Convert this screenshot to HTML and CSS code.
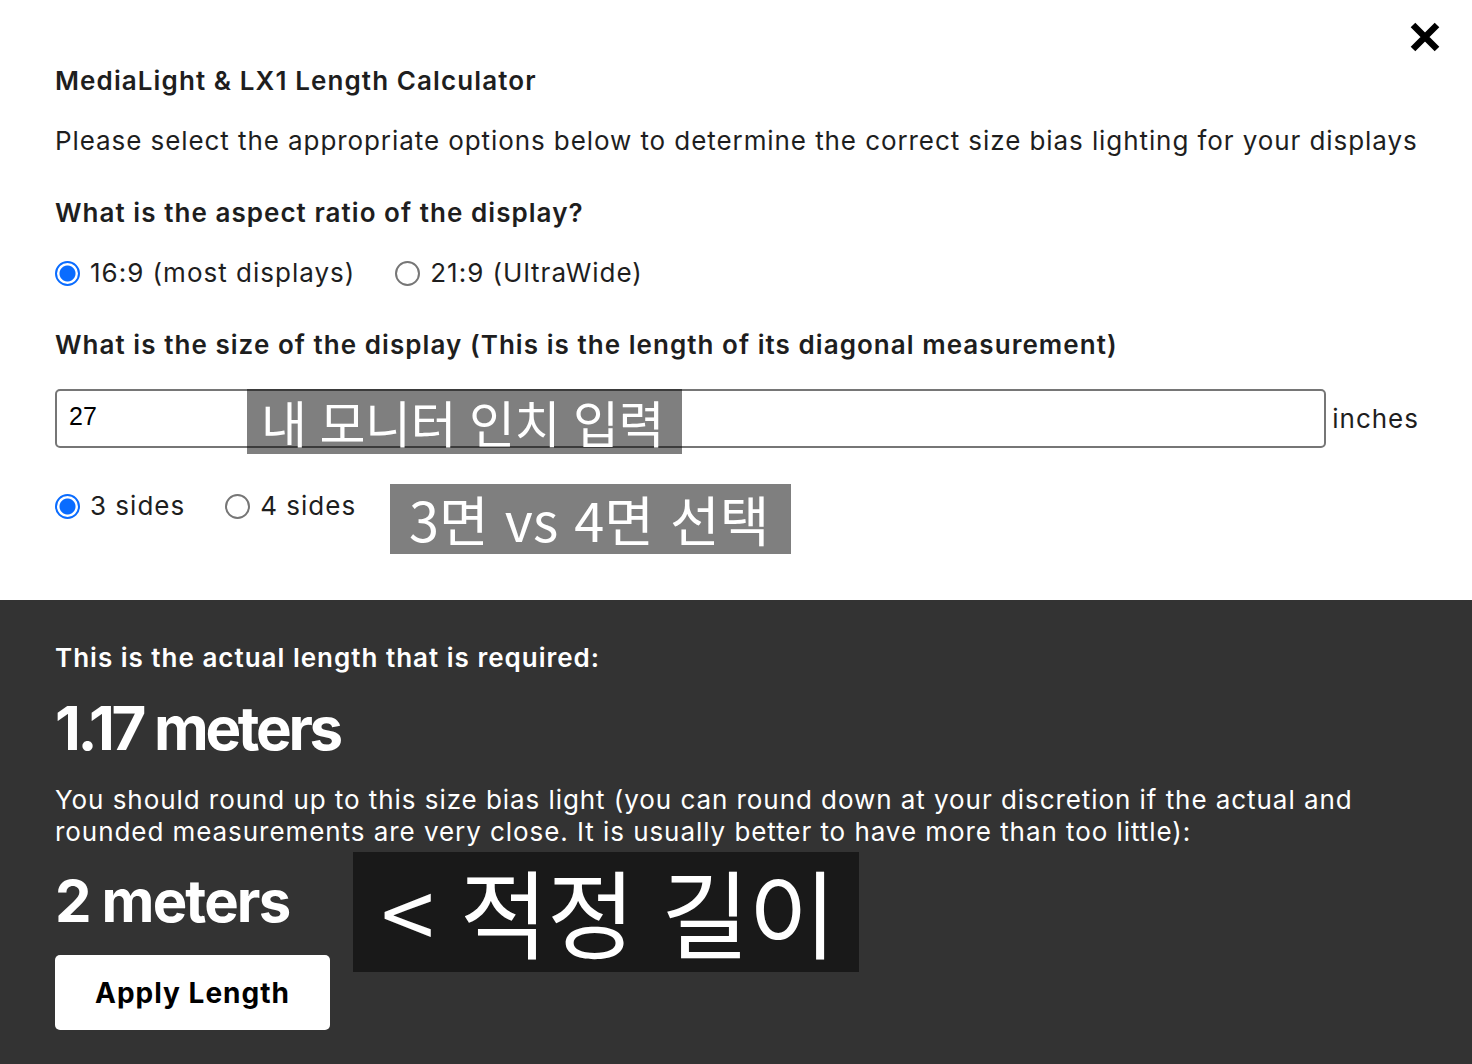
FILE: index.html
```html
<!DOCTYPE html>
<html lang="en">
<head>
<meta charset="utf-8">
<title>MediaLight &amp; LX1 Length Calculator</title>
<link rel="stylesheet" href="styles.css">
</head>
<body>
<div class="modal">
  <button class="close" aria-label="Close">
    <svg viewBox="0 0 32 32" width="32" height="32"><path d="M4 4 L28 28 M28 4 L4 28" stroke="#000" stroke-width="6.5" fill="none"/></svg>
  </button>
  <section class="form">
    <h1 class="title">MediaLight &amp; LX1 Length Calculator</h1>
    <p class="intro">Please select the appropriate options below to determine the correct size bias lighting for your displays</p>
    <h2 class="question q1">What is the aspect ratio of the display?</h2>
    <div class="radios ratio">
      <label class="opt"><input type="radio" name="ratio" checked><span>16:9 (most displays)</span></label>
      <label class="opt"><input type="radio" name="ratio"><span>21:9 (UltraWide)</span></label>
    </div>
    <h2 class="question q2">What is the size of the display (This is the length of its diagonal measurement)</h2>
    <div class="size-row">
      <div class="field">
        <input class="size-input" type="text" value="27">
        <div class="note note-size">내 모니터 인치 입력</div>
      </div>
      <span class="unit">inches</span>
    </div>
    <div class="radios sides">
      <label class="opt"><input type="radio" name="sides" checked><span>3 sides</span></label>
      <label class="opt"><input type="radio" name="sides"><span>4 sides</span></label>
      <div class="note note-sides">3면 vs 4면 선택</div>
    </div>
  </section>
  <section class="result">
    <h3 class="result-label">This is the actual length that is required:</h3>
    <div class="big actual">1.17 meters</div>
    <p class="advice">You should round up to this size bias light (you can round down at your discretion if the actual and rounded measurements are very close. It is usually better to have more than too little):</p>
    <div class="rounded">
      <div class="big final">2 meters</div>
      <div class="note note-length">&lt; 적정 길이</div>
    </div>
    <button class="apply">Apply Length</button>
  </section>
</div>
</body>
</html>
```

FILE: styles.css
```css
* { box-sizing: border-box; }
html, body { margin: 0; padding: 0; }
body {
  background: #ffffff;
  font-family: Inter, "Noto Sans", "Noto Sans CJK KR", sans-serif;
  color: #1e1e1e;
  width: 1472px;
  height: 1064px;
  overflow: hidden;
}
.modal { position: relative; height: 1064px; display: flex; flex-direction: column; }
.close {
  position: absolute;
  top: 21px;
  left: 1409px;
  width: 32px;
  height: 32px;
  padding: 0;
  border: 0;
  background: transparent;
}
.close svg { display: block; }

.form { height: 600px; padding: 65px 0 0 55px; }
.title { margin: 0; font-size: 26px; line-height: 32px; font-weight: 600; letter-spacing: 1.1px; color: #1e1e1e; }
.intro { margin: 28px 0 0; font-size: 26px; line-height: 32px; font-weight: 400; letter-spacing: 0.92px; white-space: nowrap; }
.question { margin: 0; font-size: 26px; line-height: 32px; font-weight: 600; letter-spacing: 1.05px; }
.q1 { margin-top: 40px; }
.radios { display: flex; align-items: center; gap: 40px; font-size: 26px; line-height: 32px; letter-spacing: 1px; }
.ratio { margin-top: 28px; }
.q2 { margin-top: 40px; }
.opt { display: flex; align-items: center; gap: 10px; }
.opt input {
  appearance: none;
  -webkit-appearance: none;
  margin: 0;
  width: 25px;
  height: 25px;
  border: 2px solid #767676;
  border-radius: 50%;
  background: #fff;
}
.opt input:checked {
  border: 2.5px solid #0a6cff;
  background: radial-gradient(circle, #0a6cff 0 7.5px, #fff 8.5px);
}

.size-row { margin-top: 28px; display: flex; align-items: center; gap: 6px; width: 1364px; }
.field { position: relative; flex: 1; }
.size-input {
  display: block;
  width: 100%;
  height: 59px;
  border: 2px solid #767676;
  border-radius: 5px;
  padding: 0 12px 4px;
  font-family: "Liberation Sans", sans-serif;
  font-size: 25px;
  color: #000;
  background: #fff;
}
.unit { font-size: 26px; line-height: 32px; letter-spacing: 1px; }

.note {
  position: absolute;
  background: rgba(0, 0, 0, 0.5);
  color: #fff;
  font-family: "Noto Sans CJK KR", sans-serif;
  white-space: nowrap;
}
.note-size {
  left: 192px;
  top: 0;
  width: 435px;
  height: 65px;
  font-size: 50px;
  line-height: 65px;
  padding-left: 14px;
  letter-spacing: -0.4px;
  word-spacing: 2px;
}
.sides { margin-top: 42px; position: relative; }
.note-sides {
  left: 335px;
  top: -6px;
  width: 401px;
  height: 70px;
  font-size: 54px;
  line-height: 70px;
  font-weight: 400;
  padding-left: 19px;
  letter-spacing: 0;
  word-spacing: 4px;
}

.result { flex: 1; background: #333333; color: #fff; padding: 42px 0 0 55px; }
.result-label { margin: 0; font-size: 26px; line-height: 32px; font-weight: 600; letter-spacing: 1px; }
.big { font-weight: 700; }
.actual { margin-top: 18px; font-size: 60px; line-height: 72px; letter-spacing: -3.3px; }
.advice { margin: 20px 0 0; font-size: 26px; line-height: 32px; width: 1362px; letter-spacing: 0.94px; }
.rounded { position: relative; margin-top: 18px; }
.final { font-size: 58px; line-height: 70px; letter-spacing: -1.85px; }
.note-length {
  left: 298px;
  top: -14px;
  width: 506px;
  height: 120px;
  font-size: 96px;
  line-height: 116px;
  padding-left: 28px;
  letter-spacing: -1px;
  word-spacing: 6px;
}
.apply {
  display: block;
  margin-top: 19px;
  width: 275px;
  height: 75px;
  border: 0;
  border-radius: 5px;
  background: #fff;
  color: #000;
  font-family: Inter, sans-serif;
  font-size: 28px;
  font-weight: 700;
  letter-spacing: 1px;
}
```
